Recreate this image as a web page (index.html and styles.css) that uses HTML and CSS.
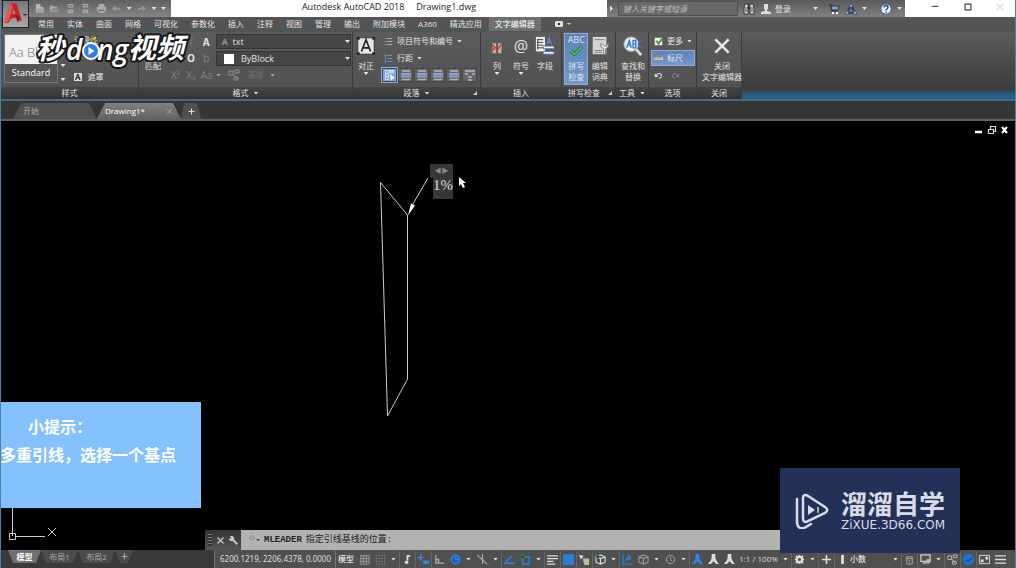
FILE: index.html
```html
<!DOCTYPE html>
<html lang="zh-CN">
<head>
<meta charset="utf-8">
<title>Autodesk AutoCAD 2018 - Drawing1.dwg</title>
<link rel="stylesheet" href="styles.css">
</head>
<body>
<svg class="defs" aria-hidden="true">
  <symbol id="new" viewBox="0 0 12 12"><path d="M2 1h5v3h3v7H2z" fill="#b4b4b4"/><path d="M3 6h8v5H3z" fill="#a2a2a2"/></symbol>
  <symbol id="open" viewBox="0 0 12 12"><path d="M1 3h4l1 1h3v2H4l-3 4z" fill="#aaa"/><path d="M4 7h7l-2 3H2z" fill="#999"/></symbol>
  <symbol id="save" viewBox="0 0 12 12"><path d="M3 1h6v4H3zM3 7h6v4H3z" fill="#aaa"/><path d="M4 3h4M5 9h2" stroke="#666"/></symbol>
  <symbol id="print" viewBox="0 0 12 12"><path d="M3 1h6v3H3zM1 4h10v5H1zM3 9h6v2H3z" fill="#aaa"/><path d="M3 8h6" stroke="#555"/></symbol>
  <symbol id="undo" viewBox="0 0 12 12"><path d="M1 6l4-3v2c4 0 5 1 6 4-2-2-3-2-6-2v2z" fill="currentColor"/></symbol>
  <symbol id="redo" viewBox="0 0 12 12"><path d="M11 6L7 3v2C3 5 2 6 1 9c2-2 3-2 6-2v2z" fill="currentColor"/></symbol>
  <symbol id="undo-hook" viewBox="0 0 12 12"><path d="M1 3v5h5z" fill="#ddd"/><path d="M3 6c2-4 7-3 7 0 0 2-1 3-3 4" fill="none" stroke="#ddd" stroke-width="1.500"/></symbol>
  <symbol id="redo-hook" viewBox="0 0 12 12"><path d="M11 3v5H6z" fill="#ddd"/><path d="M9 6C7 2 2 3 2 6c0 2 1 3 3 4" fill="none" stroke="#ddd" stroke-width="1.500"/></symbol>
  <symbol id="binoc" viewBox="0 0 12 12"><path d="M1 11V5l1-4h3v10zM7 11V1h3l1 4v6z" fill="#ddd" stroke="#333"/><path d="M5 5h2" stroke="#222" stroke-width="2"/><path d="M3 4v5M9 4v5" stroke="#444"/></symbol>
  <symbol id="user" viewBox="0 0 12 12"><path d="M4 1h4v5l-1 1v1l4 1v2H1V9l4-1V7L4 6z" fill="#ddd"/></symbol>
  <symbol id="cart" viewBox="0 0 12 12"><path d="M1 2h2l1 6h6" fill="none" stroke="#283850" stroke-width="1.500"/><path d="M3 3h8l-1 4H4z" fill="#8ba3c0" stroke="#283850"/><circle cx="5" cy="10" r="1.200" fill="#fff"/><circle cx="9" cy="10" r="1.200" fill="#fff"/></symbol>
  <symbol id="a360" viewBox="0 0 12 12"><path d="M6 2L2 10h8z" fill="none" stroke="#2c4568" stroke-width="2"/><path d="M6 0l2 4H4zM2 7l2 4H0zM10 7l2 4H8z" fill="#b8cfea" stroke="#2c4568" stroke-width=".8"/></symbol>
  <symbol id="help" viewBox="0 0 12 12"><circle cx="6" cy="6" r="5.200" fill="#e9f2fc" stroke="#345d8b"/><path d="M4 4.500c0-3 4-2.500 4 0C8 6 6 6 6 7.500M6 8.500v1.500" fill="none" stroke="#234a7b" stroke-width="1.400"/></symbol>
  <symbol id="cross" viewBox="0 0 12 12"><path d="M2 2l8 8M10 2l-8 8" stroke="currentColor" stroke-width="1.600" fill="none"/></symbol>
  <symbol id="align" viewBox="0 0 12 12"><path d="M2 2h8M2 10.500h8" stroke="#b8b8b8" stroke-width="1.500"/><path d="M1 5h10M1 7.500h10" stroke="#86a4d0" stroke-width="1.800"/></symbol>
  <symbol id="just" viewBox="0 0 12 12"><path d="M1 1h9v3H5v7H1z" fill="#c5daf7"/><path d="M6 5l5 4-2 .5L7 12z" fill="#fff"/><path d="M2 3h3M2 6h2M2 9h2" stroke="#5b89c9"/></symbol>
  <symbol id="dist" viewBox="0 0 12 12"><path d="M1 2h10M4 8h4M4 11h4" stroke="#b8b8b8" stroke-width="1.400"/><path d="M1 5h3M8 5h3" stroke="#86a4d0" stroke-width="2"/></symbol>
  <symbol id="list" viewBox="0 0 12 12"><path d="M1 2h2M1 6h2M1 10h2" stroke="#6e9de0" stroke-width="1.500"/><path d="M4 2h7M4 6h7M4 10h7" stroke="#c8c8c8"/></symbol>
  <symbol id="space" viewBox="0 0 12 12"><path d="M2 1v10M0 3l2-2 2 2M0 9l2 2 2-2" stroke="#619be7" fill="none"/><path d="M5 2h6M5 6h6M5 10h6" stroke="#7da5dc"/></symbol>
  <symbol id="bigA" viewBox="0 0 22 22"><path d="M2 2h18v18H2z" fill="#e6e6e6" stroke="#333"/><path d="M6 17l5-13 5 13M8 13h6" fill="none" stroke="#222" stroke-width="1.800"/><path d="M1 1h3v3H1zM18 1h3v3h-3zM1 18h3v3H1zM18 18h3v3h-3z" fill="#222"/></symbol>
  <symbol id="cols" viewBox="0 0 22 22"><path d="M6 8h4v11H6zM12 8h4v11h-4z" fill="#c6aaa4"/><path d="M6 10l3 3-3 3M16 9l-6 8" stroke="#c5392d" fill="none" stroke-width="1.600"/></symbol>
  <symbol id="field" viewBox="0 0 22 22"><path d="M1 1h10v16H1z" fill="#eee"/><path d="M3 4h6M3 7h6M3 10h6M3 13h6M3 3v12" stroke="#333"/><path d="M13 9l2.500-7L18 9M14 7h3" stroke="#5c8bd0" fill="none" stroke-width="1.500"/><path d="M9 11h12v3H9zM9 17h12v3H9z" fill="#f3f3f3" stroke="#4a6ea6"/></symbol>
  <symbol id="check" viewBox="0 0 22 12"><path d="M5 6l4 4 9-9" stroke="#1c6d26" stroke-width="4" fill="none"/><path d="M5 6l4 4 9-9" stroke="#48b751" stroke-width="2.500" fill="none"/></symbol>
  <symbol id="dict" viewBox="0 0 22 22"><path d="M3 1h15v19H3z" fill="#d5d5d5"/><path d="M5 4h11M5 16h8M5 18h8" stroke="#777"/><path d="M12 8v4l3 2v6h2v-6l3-2V8l-2 3h-3z" fill="#f4f4f4" stroke="#777"/></symbol>
  <symbol id="find" viewBox="0 0 22 22"><path d="M13 13l7 8" stroke="#ddd" stroke-width="3"/><circle cx="9" cy="9" r="8" fill="#e4effc" stroke="#aaa"/><path d="M4 13l3-8 2 8M5 10h3M11 5v8h3V9h-3 3V5zM21 6h-2l-2 2v3l2 1h2" fill="none" stroke="#3977c7" stroke-width="1.500"/></symbol>
  <symbol id="tick" viewBox="0 0 12 12"><path d="M1 1h10v10H1z" fill="#eee"/><path d="M3 5l3 4 5-7" stroke="#3d9b34" stroke-width="2.500" fill="none"/></symbol>
  <symbol id="ruler" viewBox="0 0 12 12"><path d="M0 4h12v4H0z" fill="#d8bf98"/><path d="M2 4v2M5 4v2M8 4v2" stroke="#80643d"/></symbol>
  <symbol id="grid" viewBox="0 0 12 12"><path d="M2 1v10M5 1v10M8 1v10M11 1v10M1 2h10M1 5h10M1 8h10M1 11h10" stroke="#9b9b9b"/></symbol>
  <symbol id="dots" viewBox="0 0 12 12"><path d="M1 2h10M1 5h10M1 8h10M1 11h10" stroke="#aaa" stroke-dasharray="1 2"/></symbol>
  <symbol id="infer" viewBox="0 0 12 12"><path d="M6 1v6M7 2h2" stroke="#ddd" stroke-width="2"/><circle cx="5" cy="9" r="2" fill="#ddd"/></symbol>
  <symbol id="dyn" viewBox="0 0 12 12"><path d="M3 0v7M0 4h6" stroke="#2f8cf0" stroke-width="1.500"/><path d="M5 7h7v4H6z" fill="#2e86e8"/></symbol>
  <symbol id="ortho" viewBox="0 0 12 12"><path d="M2 1v9h9M2 6h3v4" stroke="#aaa" fill="none" stroke-width="1.400"/></symbol>
  <symbol id="polar" viewBox="0 0 12 12"><circle cx="6" cy="6" r="4.500" stroke="#2c7fe0" stroke-width="2" fill="#245a97"/><path d="M6 3v3h5" stroke="#2c7fe0" stroke-width="2" fill="none"/></symbol>
  <symbol id="iso" viewBox="0 0 12 12"><path d="M0 1l11 10M6 0v11" stroke="#aaa" stroke-width="1.300"/></symbol>
  <symbol id="track" viewBox="0 0 12 12"><path d="M0 10h12M2 8l7-6" stroke="#2c7fe0" stroke-width="1.800"/></symbol>
  <symbol id="osnap" viewBox="0 0 12 12"><path d="M3 3h7v8H3z" stroke="#2c7fe0" stroke-width="1.600" fill="none"/><circle cx="3" cy="3" r="2" fill="#164b2a" stroke="#3c9b55"/></symbol>
  <symbol id="lwt" viewBox="0 0 12 12"><path d="M0 2h12M0 5h12M0 8h7M0 11h9" stroke="#ddd" stroke-width="1.500"/></symbol>
  <symbol id="fill" viewBox="0 0 12 12"><path d="M0 0h12v12H0z" fill="#2b7dd8"/></symbol>
  <symbol id="cycle" viewBox="0 0 12 12"><path d="M4 5h7v7H6z" fill="#b8c497"/><path d="M0 1l5 1-3 4z" fill="#ddd"/></symbol>
  <symbol id="cube" viewBox="0 0 12 12"><path d="M6 1l5 2v6l-5 2-5-2V3zM1 3l5 2 5-2M6 5v6" fill="none" stroke="currentColor" stroke-width="1.200"/></symbol>
  <symbol id="cubesnap" viewBox="0 0 12 12"><path d="M6 1l5 2v6l-5 2-5-2V3zM1 3l5 2 5-2M6 5v6" fill="none" stroke="currentColor" stroke-width="1.200"/><circle cx="3" cy="3" r="2" fill="#164b2a" stroke="#3c9b55"/></symbol>
  <symbol id="ducs" viewBox="0 0 12 12"><path d="M1 1v10h10M3 8l5-5M6 1c4 0 4 5 1 5" stroke="#2c7fe0" stroke-width="1.500" fill="none"/></symbol>
  <symbol id="gizmo" viewBox="0 0 12 12"><circle cx="6" cy="6" r="4.500" stroke="#aaa" fill="none"/><path d="M6 3v4h2" stroke="#c67648" fill="none" stroke-width="1.400"/></symbol>
  <symbol id="man" viewBox="0 0 12 12"><path d="M4 0h4v4l1 3 3 4h-3L6 8l-3 3H0l3-4 1-3z" fill="currentColor"/></symbol>
  <symbol id="gear" viewBox="0 0 12 12"><circle cx="6" cy="6" r="3" stroke="#ddd" stroke-width="2.500" fill="none"/><path d="M6 1v2M6 9v2M1 6h2M9 6h2M2 2l1 1M9 9l1 1M10 2L9 3M2 10l1-1" stroke="#ddd" stroke-width="1.500"/></symbol>
  <symbol id="plus" viewBox="0 0 12 12"><path d="M6 1v10M1 6h10" stroke="currentColor" stroke-width="1.800"/></symbol>
  <symbol id="unit" viewBox="0 0 12 12"><path d="M6 1v10" stroke="#ddd" stroke-width="3"/></symbol>
  <symbol id="quick" viewBox="0 0 12 12"><path d="M3 3h6v8H3zM3 5h6M5 7h2M5 9h2" stroke="#aaa" fill="none"/></symbol>
  <symbol id="monitor" viewBox="0 0 12 12"><path d="M1 1h10v7H1zM3 10h4" stroke="#ccc" fill="none" stroke-width="1.400"/><circle cx="9" cy="8" r="2.500" fill="#bbb"/></symbol>
  <symbol id="isolate" viewBox="0 0 12 12"><path d="M1 2h4v4H1zM7 1h4v3H7zM5 5l4 5M6 8h4v3H6z" stroke="#bbb" fill="none"/></symbol>
  <symbol id="hw" viewBox="0 0 12 12"><circle cx="6" cy="6" r="6" fill="#1477d4"/><path d="M3 6l2 2 5-4" stroke="#145091" stroke-width="1.500" fill="none"/></symbol>
  <symbol id="full" viewBox="0 0 12 12"><path d="M.5 1.500h11v9H.5z" stroke="#ddd" fill="none"/><path d="M7 3h3v3H7zM2 6h3v3H2z" fill="#ddd"/></symbol>
  <symbol id="menu" viewBox="0 0 12 12"><path d="M0 2h12M0 6h12M0 10h12" stroke="#ddd" stroke-width="1.500"/></symbol>
  <symbol id="wrench" viewBox="0 0 12 12"><path d="M4 4l7 7" stroke="#ccc" stroke-width="2.500"/><path d="M3 0L1 1l2 2-1 1-2-1v2l3 2 3-1 1-3-2-3z" fill="#ccc"/></symbol>
</svg>

<header class="titlebar">
  <button class="app" aria-label="应用程序菜单"><svg viewBox="0 0 28 26"><path d="M1 23L9 1h6l6 19-5 2-1-5-6 1-3 5z" fill="#c91f26"/><path d="M10 13l2-6 2 6z" fill="#8d8d8d"/><path d="M1 23L9 1l2 4-5 17z" fill="#ef5350"/><path d="M14 14l5 2-3 5z" fill="#8b1116"/><path d="M22 13h5l-2 2z" fill="#222"/></svg></button>
  <div class="quick">
    <button aria-label="新建"><svg><use href="#new"/></svg></button>
    <button aria-label="打开"><svg><use href="#open"/></svg></button>
    <button aria-label="保存"><svg><use href="#save"/></svg></button>
    <button aria-label="另存为"><svg><use href="#save"/></svg></button>
    <button aria-label="打印"><svg><use href="#print"/></svg></button>
    <button class="dim" aria-label="放弃"><svg><use href="#undo"/></svg></button>
    <i class="caret"></i>
    <button class="dim" aria-label="重做"><svg><use href="#redo"/></svg></button>
    <i class="caret"></i><i class="caret"></i>
  </div>
  <h1 class="title"><span>Autodesk AutoCAD 2018</span><span>Drawing1.dwg</span></h1>
  <div class="info">
    <i class="caret side"></i>
    <input class="search" type="text" placeholder="键入关键字或短语" aria-label="搜索">
    <button aria-label="查找"><svg><use href="#binoc"/></svg></button>
    <button class="login"><svg><use href="#user"/></svg>登录</button>
    <i class="caret"></i>
    <button class="shop" aria-label="应用商店"><svg><use href="#cart"/></svg></button>
    <button aria-label="保持连接"><svg><use href="#a360"/></svg></button>
    <i class="caret"></i>
    <button class="helpbtn" aria-label="帮助"><svg><use href="#help"/></svg></button>
    <i class="caret"></i>
  </div>
  <div class="window">
    <button aria-label="最小化"><svg viewBox="0 0 12 12"><path d="M3 5.500h6" stroke="#555"/></svg></button>
    <button aria-label="最大化"><svg viewBox="0 0 12 12"><path d="M3.500 3.500h5v5h-5z" fill="none" stroke="#444"/></svg></button>
    <button aria-label="关闭"><svg viewBox="0 0 12 12"><path d="M3 3l6 6M9 3L3 9" stroke="#ddd"/></svg></button>
  </div>
</header>

<nav class="tabs">
  <button>常用</button><button>实体</button><button>曲面</button><button>网格</button><button>可视化</button><button>参数化</button><button>插入</button><button>注释</button><button>视图</button><button>管理</button><button>输出</button><button>附加模块</button><button>A360</button><button>精选应用</button><button class="current">文字编辑器</button>
  <button class="minribbon" aria-label="最小化功能区"><svg viewBox="0 0 18 8"><rect x="1" y="1" width="8" height="6" rx="1" fill="#ddd"/><path d="M4 3h2v2H4z" fill="#333"/><path d="M13 3h4l-2 2z" fill="#ddd"/></svg></button>
</nav>

<section class="ribbon">
  <div class="panel p-style">
    <div class="body">
      <div class="stylebox"><div class="sample">Aa BbC</div><div class="name">Standard</div></div>
      <div class="scroll"><i class="caret"></i><i class="caret"></i></div>
      <div class="stack"><button>注释性</button><button class="mask"><b>A</b>遮罩</button></div>
    </div>
    <div class="label">样式</div>
  </div>
  <div class="panel p-format">
    <div class="body">
      <button class="match">匹配</button>
      <div class="letters">
        <span></span><button class="off"><em>I</em></button><button>A</button>
        <span></span><button>O</button><button class="off">b</button>
        <button class="off">X²</button><button class="off">X₂</button><button class="off">Aa</button>
      </div>
      <div class="combos">
        <div class="combo"><span class="fonticon">A</span><select aria-label="字体"><option>txt</option></select><i class="caret"></i></div>
        <div class="combo"><span class="swatch"></span><select aria-label="颜色"><option>ByBlock</option></select><i class="caret"></i></div>
        <div class="clear"><i class="caret"></i><svg><use href="#isolate"/></svg><button class="off">清除</button><i class="caret"></i></div>
      </div>
    </div>
    <div class="label">格式<i class="caret"></i></div>
  </div>
  <div class="panel p-para">
    <div class="body">
      <button class="big"><svg><use href="#bigA"/></svg>对正<i class="caret"></i></button>
      <div class="col">
        <button class="row"><svg><use href="#list"/></svg>项目符号和编号<i class="caret"></i></button>
        <button class="row"><svg><use href="#space"/></svg>行距<i class="caret"></i></button>
        <div class="aligns">
          <button class="on" aria-label="默认"><svg><use href="#just"/></svg></button><button aria-label="左对齐"><svg><use href="#align"/></svg></button><button aria-label="居中"><svg><use href="#align"/></svg></button><button aria-label="右对齐"><svg><use href="#align"/></svg></button><button aria-label="对正"><svg><use href="#align"/></svg></button><button aria-label="分散对齐"><svg><use href="#dist"/></svg></button>
        </div>
      </div>
    </div>
    <div class="label">段落<i class="caret"></i><i class="corner"></i></div>
  </div>
  <div class="panel p-insert">
    <div class="body even">
      <button class="big"><svg><use href="#cols"/></svg>列<i class="caret"></i></button>
      <button class="big"><span class="at">@</span>符号<i class="caret"></i></button>
      <button class="big"><svg><use href="#field"/></svg>字段</button>
    </div>
    <div class="label">插入</div>
  </div>
  <div class="panel p-spell">
    <div class="body even">
      <button class="big on"><span class="abc">ABC</span><svg class="checkmark"><use href="#check"/></svg>拼写<br>检查</button>
      <button class="big"><svg><use href="#dict"/></svg>编辑<br>词典</button>
    </div>
    <div class="label shifted">拼写检查<i class="corner"></i></div>
  </div>
  <div class="panel p-tool">
    <div class="body even"><button class="big"><svg><use href="#find"/></svg>查找和<br>替换</button></div>
    <div class="label">工具<i class="caret"></i></div>
  </div>
  <div class="panel p-option">
    <div class="body"><div class="col">
      <button class="row"><svg><use href="#tick"/></svg>更多<i class="caret"></i></button>
      <button class="row on"><svg><use href="#ruler"/></svg>标尺</button>
      <div class="row hist"><button aria-label="放弃"><svg><use href="#undo-hook"/></svg></button><button class="off" aria-label="重做"><svg><use href="#redo-hook"/></svg></button></div>
    </div></div>
    <div class="label">选项</div>
  </div>
  <div class="panel p-close">
    <div class="body even"><button class="big"><svg class="closeicon"><use href="#cross"/></svg>关闭<br>文字编辑器</button></div>
    <div class="label">关闭</div>
  </div>
  <div class="rest"></div>
  <svg class="brand" role="img" aria-label="秒懂视频">
    <g class="brandtext"><text x="2" y="25">秒</text><text class="latin" x="32" y="26">d</text><text class="latin" x="63" y="26">ng</text><text x="94" y="24">视频</text></g>
    <circle cx="57" cy="17" r="8" fill="#2f7de5" stroke="#fff" stroke-width="2"/><path d="M54.500 13l6 4-6 4z" fill="#fff"/><path d="M58 6l-3-4 4 2 4-3-1 5z" fill="#ffdc2f" stroke="#222" stroke-width=".7"/>
  </svg>
</section>

<nav class="files">
  <button class="file start">开始</button>
  <button class="file active">Drawing1*<svg><use href="#cross"/></svg></button>
  <button class="file add" aria-label="新图形"><svg><use href="#plus"/></svg></button>
</nav>

<main class="canvas">
  <svg class="drawing" aria-label="图形">
    <path d="M379.500 61.500L406.500 94v164L386.500 295zM427 57L409 88" fill="none" stroke="#ccc"/>
    <path d="M407 94.500l3-12 4 2z" fill="#fff"/>
    <path d="M458 56v9l2-2 2 4 2-1-2-4h3z" fill="#fff"/>
  </svg>
  <div class="mtext"><div class="mruler">◀▶</div><div class="mbody">1%</div></div>
  <div class="docwin">
    <button aria-label="最小化"><svg viewBox="0 0 10 10"><path d="M1 7h7" stroke="#fff" stroke-width="2.500"/></svg></button>
    <button aria-label="还原"><svg viewBox="0 0 10 10"><path d="M1.500 4.500h5v4h-5zM3.500 4V1.500h5v5H7" stroke="#ddd" stroke-width="1.200" fill="none"/></svg></button>
    <button aria-label="关闭"><svg viewBox="0 0 10 10"><path d="M2 2l5 6M7 2L2 8" stroke="#fff" stroke-width="2"/></svg></button>
  </div>
  <svg class="ucs" viewBox="0 0 60 50"><path d="M11.500 0v38M14 38.500h30M8.500 35.500h6v6h-6zM47 30l8 8M55 30l-8 8" fill="none" stroke="#ccc"/></svg>
  <aside class="tip"><p class="tiphead">小提示：</p><p>多重引线，选择一个基点</p></aside>
  <div class="command">
    <div class="handle"><span class="grip"></span><button aria-label="关闭"><svg><use href="#cross"/></svg></button><button aria-label="自定义"><svg><use href="#wrench"/></svg></button></div>
    <div class="prompt"><svg class="cmdicon" viewBox="0 0 12 12"><circle cx="4" cy="4" r="2" fill="none" stroke="#666" stroke-dasharray="1 1"/><path d="M8 5h4l-2 2z" fill="#444"/></svg><b>MLEADER</b><span>指定引线基线的位置:</span></div>
  </div>
</main>

<footer class="status">
  <nav class="layouts"><button class="layout active">模型</button><button class="layout">布局1</button><button class="layout">布局2</button><button class="layout more" aria-label="新建布局"><svg><use href="#plus"/></svg></button></nav>
  <div class="tools">
    <span class="coords">6200.1219, 2206.4378, 0.0000</span>
    <button class="model">模型</button>
    <button aria-label="栅格"><svg><use href="#grid"/></svg></button><button aria-label="捕捉"><svg><use href="#dots"/></svg></button><i class="caret"></i>
    <button class="sep" aria-label="推断约束"><svg><use href="#infer"/></svg></button><button class="sep" aria-label="动态输入"><svg><use href="#dyn"/></svg></button><button class="sep" aria-label="正交"><svg><use href="#ortho"/></svg></button><button aria-label="极轴"><svg><use href="#polar"/></svg></button><i class="caret"></i>
    <button aria-label="等轴测"><svg><use href="#iso"/></svg></button><i class="caret"></i>
    <button class="sep" aria-label="对象追踪"><svg><use href="#track"/></svg></button><button aria-label="对象捕捉"><svg><use href="#osnap"/></svg></button><i class="caret"></i>
    <button class="sep" aria-label="线宽"><svg><use href="#lwt"/></svg></button><button class="sep" aria-label="透明度"><svg><use href="#fill"/></svg></button><button class="sep" aria-label="选择循环"><svg><use href="#cycle"/></svg></button><button class="sep" aria-label="三维捕捉"><svg><use href="#cubesnap"/></svg></button><i class="caret"></i>
    <button class="sep" aria-label="动态UCS"><svg><use href="#ducs"/></svg></button><button class="grey" aria-label="选择过滤"><svg><use href="#cube"/></svg></button><i class="caret"></i>
    <button aria-label="小控件"><svg><use href="#gizmo"/></svg></button><i class="caret"></i>
    <button class="sep blue" aria-label="注释可见性"><svg><use href="#man"/></svg></button><button aria-label="自动缩放"><svg><use href="#man"/></svg></button><button aria-label="注释比例"><svg><use href="#man"/></svg></button>
    <button class="scale">1:1 / 100%</button><i class="caret"></i>
    <button class="sep" aria-label="工作空间"><svg><use href="#gear"/></svg></button><i class="caret"></i>
    <button class="sep" aria-label="注释监视器"><svg><use href="#plus"/></svg></button>
    <button class="sep" aria-label="单位"><svg><use href="#unit"/></svg></button><button class="units">小数</button><i class="caret"></i>
    <button class="sep" aria-label="快捷特性"><svg><use href="#quick"/></svg></button>
    <button class="sep" aria-label="锁定界面"><svg><use href="#monitor"/></svg></button><i class="caret"></i>
    <button class="sep" aria-label="隔离对象"><svg><use href="#isolate"/></svg></button><button class="sep" aria-label="硬件加速"><svg><use href="#hw"/></svg></button><button class="sep" aria-label="全屏"><svg><use href="#full"/></svg></button><button aria-label="自定义"><svg><use href="#menu"/></svg></button>
  </div>
</footer>

<div class="site">
  <svg class="sitelogo" viewBox="0 0 36 36"><path d="M9 5v20c0 4 2 5 5 3l17-8c3-2 3-4 0-6L14 3C11 1 9 2 9 5z" fill="none" stroke="#d9dce5" stroke-width="2.500"/><path d="M3 6v22c0 7 4 9 9 6l5-3" fill="none" stroke="#d9dce5" stroke-width="2.500" stroke-linecap="round"/><path d="M14 12l7 5-7 5z" fill="#d9dce5"/><path d="M24 14v6" stroke="#d9dce5" stroke-width="1.500"/></svg>
  <div class="sitename"><strong>溜溜自学</strong><span>ZiXUE.3D66.COM</span></div>
</div>
</body>
</html>
```
FILE: styles.css
```css
* { box-sizing: border-box; }
html, body { height: 100%; }
body {
  margin: 0; display: flex; flex-direction: column; position: relative; overflow: hidden;
  background: #000; color: #e4e4e4; border-left: 1px solid #52819f; border-right: 1px solid #52819f;
  font: 8px/10px "Open Sans", "Noto Sans CJK SC", sans-serif;
}
button, input, select { font: inherit; color: inherit; background: none; border: 0; padding: 0; margin: 0; }
button { display: flex; align-items: center; justify-content: center; white-space: nowrap; }
svg { width: 12px; height: 12px; flex: none; display: block; }
p, h1 { margin: 0; }
.defs { position: absolute; width: 0; height: 0; }
.caret { flex: none; width: 5px; height: 3px; background: #e4e4e4; clip-path: polygon(0 0, 100% 0, 50% 100%); }
.caret.side { width: 3px; height: 6px; clip-path: polygon(0 0, 100% 50%, 0 100%); }
.off { opacity: .3; }

.titlebar { flex: none; height: 17px; display: flex; background: #fff; }
.app { position: absolute; left: 1px; top: 0; width: 27px; height: 28px; z-index: 2; background: linear-gradient(#787878, #a8a8a8); border: 1px solid #222; }
.app svg { width: 25px; height: 24px; }
.quick { width: 170px; padding: 0 5px 0 33px; display: flex; align-items: center; justify-content: space-between; background: linear-gradient(#606060, #858585); }
.quick svg { width: 11px; height: 11px; }
.dim { color: #999; }
.title { flex: 1; display: flex; justify-content: center; gap: 12px; color: #222; font-size: 9px; font-weight: 400; line-height: 13px; }
.info { width: 298px; padding: 0 3px; display: flex; align-items: center; gap: 5px; background: linear-gradient(#595959, #808080); }
.search { width: 120px; height: 15px; padding: 0 4px; background: #686868; border: 1px solid #505050; font-style: italic; }
.search::placeholder { color: #bbb; opacity: 1; }
.login { flex: 1; justify-content: flex-start; gap: 3px; }
.shop { margin-left: 5px; }
.helpbtn { margin-left: 8px; }
.window { width: 110px; padding: 0 8px 4px 23px; display: flex; align-items: center; justify-content: space-between; }
.window svg { width: 14px; height: 14px; }

.tabs { flex: none; height: 14px; display: flex; gap: 13px; padding-left: 37px; background: #545454; }
.tabs .current { margin: 0 0 0 -6px; padding: 0 6px; background: #707070; color: #fff; }
.minribbon svg { width: 18px; height: 8px; }

.ribbon { flex: none; position: relative; height: 70px; display: flex; border-top: 1px solid #3f5969; border-bottom: 2px solid #4b6b80; background: #555; }
.panel { flex: none; display: flex; flex-direction: column; border-right: 1px solid #3b3b3b; background: linear-gradient(#5b5b5b, #505050); }
.body { flex: 1; display: flex; padding: 2px 3px 0; }
.even { justify-content: space-around; }
.label { height: 12px; display: flex; align-items: center; justify-content: center; gap: 5px; position: relative; background: linear-gradient(#464646, #333); }
.label.shifted { justify-content: flex-start; padding-left: 6px; }
.corner { position: absolute; right: 3px; bottom: 4px; width: 4px; height: 4px; background: #ccc; clip-path: polygon(100% 0, 100% 100%, 0 100%); }
.rest { flex: 1; background: linear-gradient(#5b5b5b, #3c3c3c 85%, #24618c 95%); }
.p-style { width: 138px; }
.p-format { width: 214px; }
.p-para { width: 128px; }
.p-insert { width: 81px; }
.p-spell { width: 54px; }
.p-tool { width: 33px; }
.p-option { width: 48px; }
.p-close { width: 45px; }
.on { background: linear-gradient(#5d82b8, #7498ca); outline: 1px solid #8eaeda; }
.stylebox { width: 54px; height: 49px; border: 1px solid #777; }
.sample { height: 29px; padding: 0 4px; overflow: hidden; background: #f2f2f2; color: #777; font-size: 13px; font-weight: 300; line-height: 34px; white-space: nowrap; }
.name { font-size: 9px; line-height: 18px; text-align: center; color: #fff; }
.scroll { width: 10px; display: flex; flex-direction: column; align-items: center; justify-content: flex-end; gap: 11px; padding-bottom: 6px; }
.col { display: flex; flex-direction: column; gap: 3px; }
.stack { display: flex; flex-direction: column; justify-content: space-between; align-items: flex-start; padding: 1px 6px 5px; }
.mask { gap: 6px; }
.mask b { padding: 0 1px; line-height: 8px; background: #ddd; color: #222; }
.match { width: 22px; align-items: flex-end; padding-bottom: 16px; }
.letters { width: 52px; padding: 0 2px 4px 4px; display: grid; grid-template-columns: repeat(3, 1fr); font-size: 10px; font-weight: 700; }
.letters .off { font-weight: 400; }
.combos { flex: 1; display: flex; flex-direction: column; gap: 2px; }
.combo { height: 15px; display: flex; align-items: center; gap: 3px; padding: 0 0 0 3px; background: #464646; border: 1px solid #353535; }
.combo select { flex: 1; appearance: none; font-size: 9px; line-height: 12px; }
.p-format .body { padding-right: 1px; }
.fonticon { padding: 0 2px; font-weight: 700; color: #999; }
.swatch { width: 10px; height: 10px; margin: 0 4px; background: #fff; }
.clear { height: 14px; display: flex; align-items: center; gap: 7px; opacity: .6; }
.big { flex-direction: column; justify-content: flex-start; line-height: 11px; height: 50px; padding: 0 2px; }
.big svg { width: 20px; height: 20px; margin: 2px 0 4px; }
.big .caret { margin-top: 1px; }
.at { height: 26px; font-size: 16px; line-height: 24px; }
.big .abc { height: 10px; font-size: 9px; }
.big .checkmark { width: 18px; height: 10px; }
.big .closeicon { width: 20px; }
.p-para .body { gap: 6px; }
.p-para .big { padding: 0; }
.row { height: 14px; display: flex; align-items: center; justify-content: flex-start; gap: 4px; padding: 0 2px; }
.row svg { width: 9px; height: 9px; }
.hist { gap: 8px; }
.aligns { display: flex; gap: 1px; }
.aligns button { width: 15px; height: 14px; background: #666; border: 1px solid #484848; }
.aligns .on { background: #7fa5df; }
.aligns svg { width: 12px; height: 12px; }
.brand { position: absolute; left: 33px; top: 2px; width: 158px; height: 36px; overflow: visible; }
.brandtext { fill: #fff; stroke: #171717; stroke-width: 4px; stroke-linejoin: round; paint-order: stroke; font: italic 700 28px "Noto Sans CJK SC", sans-serif; }
.latin { font: italic 600 28px "Open Sans", sans-serif; }

.files { flex: none; height: 20px; padding: 2px 0 0 12px; display: flex; align-items: stretch; background: #363636; border-bottom: 2px solid #626262; }
.file { font-size: 8px; clip-path: polygon(8px 0, calc(100% - 8px) 0, 100% 100%, 0 100%); }
.start { width: 84px; padding-left: 10px; justify-content: flex-start; background: #505050; color: #aaa; }
.active { color: #fff; }
.file.active { width: 84px; padding: 0 8px; justify-content: space-between; background: linear-gradient(#808080, #636363); font-size: 8px; }
.file.active svg { width: 7px; height: 7px; color: #aaa; }
.file.add { width: 20px; clip-path: polygon(3px 0, 80% 0, 100% 100%, 0 100%); background: #505050; }
.add svg, .more svg { width: 7px; height: 7px; }

.canvas { flex: 1; min-height: 0; position: relative; background: #000; }
.drawing { position: absolute; inset: 0; width: 100%; height: 100%; }
.mtext { position: absolute; left: 429px; top: 43px; width: 23px; }
.mruler { height: 14px; background: #373737; color: #888; font-size: 7px; line-height: 13px; text-align: center; }
.mbody { width: 20px; height: 21px; margin-left: 3px; background: #373737; color: #ddd; font: 15px/15px "Liberation Serif", serif; }
.docwin { position: absolute; top: 4px; right: 5px; display: flex; gap: 3px; }
.docwin svg { width: 10px; height: 10px; }
.ucs { position: absolute; left: 0; bottom: 2px; width: 60px; height: 50px; }
.tip { position: absolute; left: -1px; bottom: 42px; width: 201px; height: 106px; padding-top: 10px; background: #86c1ff; color: #fff; font: 700 16px/28px "Noto Sans CJK SC", sans-serif; white-space: nowrap; }
.tiphead { padding-left: 28px; }
.command { position: absolute; left: 204px; right: 74px; bottom: 0; height: 20px; display: flex; background: #b2b2b2; color: #222; }
.handle { width: 36px; display: flex; align-items: center; justify-content: space-between; padding: 0 3px; background: linear-gradient(#333, #555); color: #ccc; }
.handle svg { width: 9px; height: 9px; }
.grip { width: 4px; height: 12px; background: repeating-linear-gradient(#777 0 1px, #333 1px 3px); }
.prompt { display: flex; align-items: center; gap: 4px; padding-left: 7px; font: 9px/12px "Liberation Mono", "Noto Sans CJK SC", monospace; }
.prompt b { font-family: "Liberation Mono", monospace; }

.status { flex: none; height: 18px; display: flex; background: #3a3a3a; }
.layouts { width: 213px; padding: 0 0 5px 7px; display: flex; }
.layout { width: 37px; background: #4c4c4c; color: #aaa; clip-path: polygon(0 0, 100% 0, calc(100% - 5px) 100%, 5px 100%); }
.layout.active { width: 33px; background: #707070; color: #fff; font-weight: 700; }
.more { width: 18px; }
.tools { flex: 1; display: flex; align-items: center; background: #505050; border-left: 1px solid #777; color: #ddd; }
.tools button { width: 16px; height: 17px; flex: none; }
.tools .caret { margin: 0 3px; }
.tools svg { width: 11px; height: 11px; }
.tools .sep { border-left: 1px solid #666; }
.coords { width: 120px; padding-right: 4px; text-align: right; white-space: nowrap; font-family: "Noto Sans", sans-serif; }
.tools .model { width: 21px; border-left: 1px solid #777; color: #fff; }
.tools .scale { width: 43px; }
.tools .units { width: 40px; justify-content: flex-start; color: #fff; }
.grey { color: #999; }
.tools .blue { color: #2e86e8; }

.site { position: absolute; right: 55px; bottom: 15px; width: 180px; height: 85px; z-index: 3; display: flex; align-items: center; gap: 11px; padding-left: 14px; background: #233159; color: #d9dce5; }
.sitelogo { width: 36px; height: 36px; }
.sitename { display: flex; flex-direction: column; gap: 3px; white-space: nowrap; }
.sitename strong { font: 700 26px/26px "Noto Sans CJK SC", sans-serif; }
.sitename span { font: 12px/13px "DejaVu Sans", sans-serif; }
```
